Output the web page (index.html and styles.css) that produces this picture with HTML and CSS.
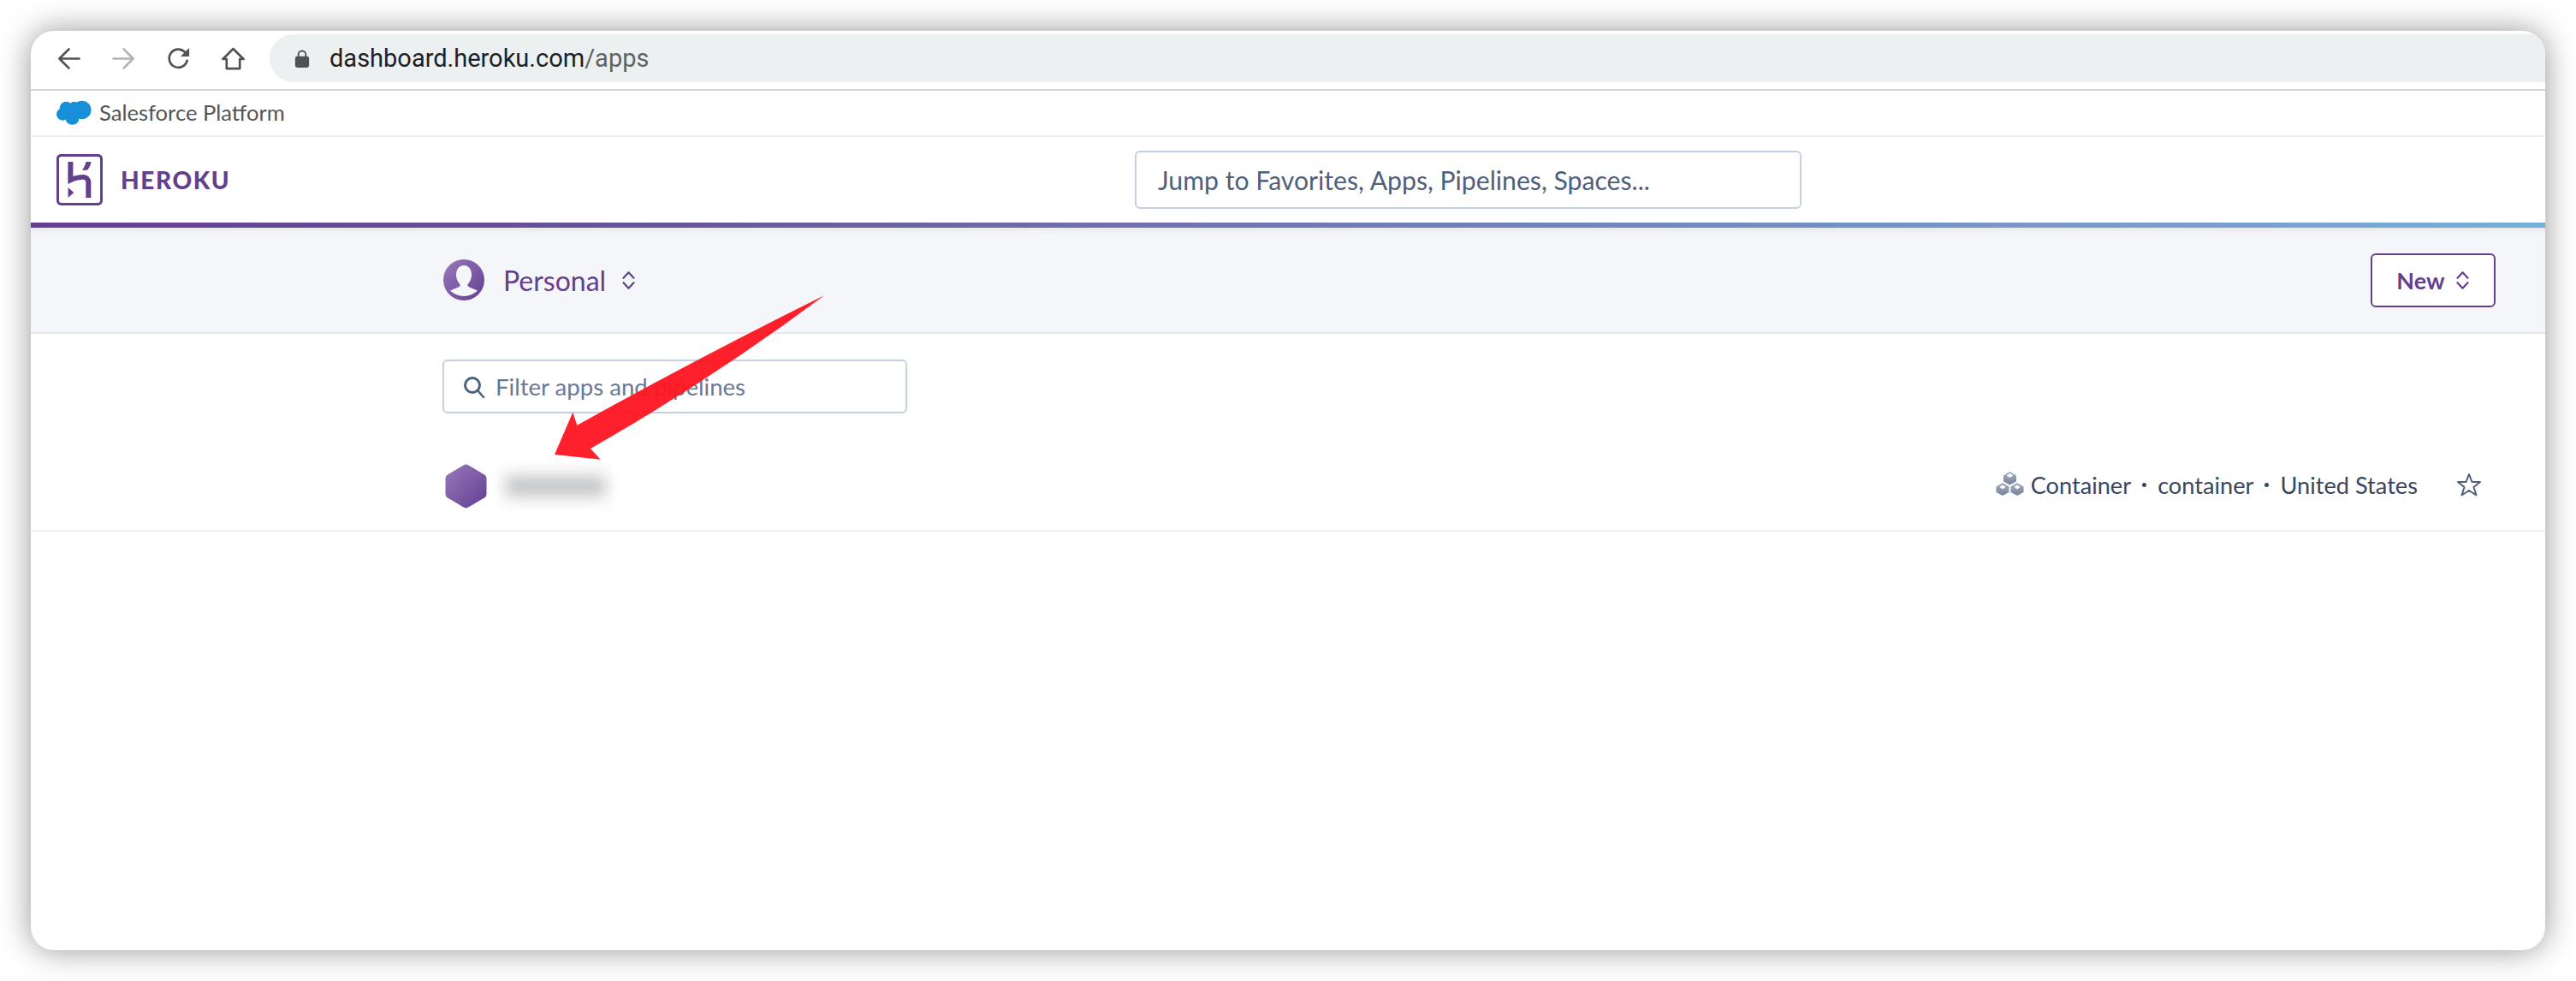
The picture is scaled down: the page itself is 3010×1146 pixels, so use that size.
FILE: index.html
```html
<!DOCTYPE html>
<html lang="en">
<head>
<meta charset="utf-8">
<title>Heroku | Personal apps</title>
<link rel="stylesheet" href="styles.css">
</head>
<body>
<main class="window">
  <div class="toolbar">
    <div class="nav-btn">
      <svg class="chrome-icon" viewBox="0 0 28 28"><path d="M26.500 14H2.500M14 2.500 2.500 14 14 25.500" fill="none" stroke="#505356" stroke-width="2.800" stroke-linecap="round" stroke-linejoin="round"/></svg>
    </div>
    <div class="nav-btn">
      <svg class="chrome-icon" viewBox="0 0 28 28"><path d="M1.500 14H25.500M14 2.500 25.500 14 14 25.500" fill="none" stroke="#b1b3b5" stroke-width="2.800" stroke-linecap="round" stroke-linejoin="round"/></svg>
    </div>
    <div class="nav-btn">
      <svg class="chrome-icon" viewBox="0 0 28 28"><path d="M24.500 16.500A11 11 0 1 1 21.500 5.800" fill="none" stroke="#505356" stroke-width="2.800" stroke-linecap="round"/><path d="M27 1v10.500H16.500z" fill="#505356"/></svg>
    </div>
    <div class="nav-btn">
      <svg class="chrome-icon" viewBox="0 0 28 28"><path d="M14 2 1.500 14.500H6V26H22V14.500H26.500Z" fill="none" stroke="#505356" stroke-width="2.800" stroke-linejoin="round"/></svg>
    </div>
    <div class="address">
      <svg class="lock" viewBox="0 0 18 22"><path d="M4.500 9V6a4.500 4.500 0 0 1 9 0v3" fill="none" stroke="#505356" stroke-width="2"/><rect x="0.500" y="8" width="17" height="14" rx="2.500" fill="#505356"/></svg>
      <span class="url">dashboard.heroku.com<span class="url-path">/apps</span></span>
    </div>
  </div>

  <div class="bookmarks">
    <svg class="cloud" viewBox="0 0 40 28"><g fill="#1790d8"><circle cx="11" cy="9" r="7.500"/><circle cx="20" cy="7" r="5.500"/><circle cx="29" cy="11" r="10.500"/><circle cx="7" cy="16" r="7"/><circle cx="18" cy="20" r="8"/><rect x="8" y="10" width="24" height="10"/></g></svg>
    <span class="bookmark-label">Salesforce Platform</span>
  </div>

  <header class="site-header">
    <div class="brand">
      <svg class="logo" viewBox="1.230 0 21.540 24" preserveAspectRatio="none"><path fill="#643f8e" d="M20.610 0H3.390C2.189 0 1.230.96 1.230 2.160v19.681c0 1.198.959 2.159 2.160 2.159h17.220c1.200 0 2.159-.961 2.159-2.159V2.160C22.770.96 21.811 0 20.610 0zm.96 21.841c0 .539-.421.96-.96.96H3.390c-.54 0-.96-.421-.96-.96V2.160c0-.54.42-.96.96-.96h17.220c.539 0 .96.42.96.96v19.681zM6.630 20.399L9.330 18l-2.700-2.400v4.799zm9.720-9.719c-.479-.48-1.379-1.080-2.879-1.080-1.621 0-3.301.421-4.500.84V3.600h-2.400v10.380l1.680-.78s2.760-1.260 5.160-1.260c1.200 0 1.500.66 1.500 1.260v7.200h2.400v-7.200c.059-.179.059-1.379-.961-2.280zM13.170 7.500h2.400c1.080-1.260 1.620-2.521 1.800-3.900h-2.399c-.241 1.379-.841 2.640-1.801 3.900z"/></svg>
      <span class="wordmark">HEROKU</span>
    </div>
    <div class="jump">Jump to Favorites, Apps, Pipelines, Spaces...</div>
  </header>
  <div class="rainbow"></div>

  <section class="subheader">
    <div class="account">
      <svg class="avatar" viewBox="0 0 48 48">
        <defs><linearGradient id="purple-a" x1="0" y1="0" x2="1" y2="1"><stop offset="0" stop-color="#9a79bb"/><stop offset="1" stop-color="#623f91"/></linearGradient></defs>
        <circle cx="24" cy="24" r="24" fill="url(#purple-a)"/>
        <path d="M24 7c-6 0-9 5-9 11 0 5 2.500 9 4.500 11 .5 2-.5 3-2 3.500L8 36.500A24 24 0 0 0 24 43a24 24 0 0 0 16-6.500L30.500 32.500c-1.500-.5-2.500-1.500-2-3.500 2-2 4.500-6 4.500-11 0-6-3-11-9-11z" fill="#f5f6fa"/>
      </svg>
      <span class="account-name">Personal</span>
      <svg class="updown updown-account" viewBox="0 0 15 21"><path d="M2 8 7.500 2 13 8M2 13 7.500 19 13 13" fill="none" stroke="#643f8e" stroke-width="2" stroke-linecap="round" stroke-linejoin="round"/></svg>
    </div>
    <button class="new-btn">New<svg class="updown" viewBox="0 0 15 21"><path d="M2 8 7.500 2 13 8M2 13 7.500 19 13 13" fill="none" stroke="#643f8e" stroke-width="2" stroke-linecap="round" stroke-linejoin="round"/></svg></button>
  </section>

  <div class="filter">
    <svg class="search-icon" viewBox="0 0 26 26"><circle cx="11" cy="11" r="8.500" fill="none" stroke="#4d6280" stroke-width="3"/><path d="M17 17 24 25" stroke="#4d6280" stroke-width="2.600" stroke-linecap="round"/></svg>
    <span class="filter-label">Filter apps and pipelines</span>
  </div>

  <div class="app-row">
    <svg class="hexagon" viewBox="0 0 48 52">
      <defs><linearGradient id="purple-b" x1="0" y1="0" x2="1" y2="1"><stop offset="0" stop-color="#9a79bb"/><stop offset="1" stop-color="#623f91"/></linearGradient></defs>
      <path d="M21.500 1.200a5 5 0 0 1 5 0L45.500 12.500A5 5 0 0 1 48 16.800V35.200a5 5 0 0 1-2.500 4.300L26.500 50.800a5 5 0 0 1-5 0L2.500 39.500A5 5 0 0 1 0 35.200V16.800A5 5 0 0 1 2.500 12.500Z" fill="url(#purple-b)"/>
    </svg>
    <div class="blurred"><div class="blur-bar"></div></div>
    <div class="app-meta">
      <svg class="stack" viewBox="0 0 33 28">
        <defs><linearGradient id="slate" x1="0" y1="0" x2="0" y2="1"><stop offset="0" stop-color="#a5aec2"/><stop offset="1" stop-color="#76829c"/></linearGradient></defs>
        <g fill="url(#slate)"><path d="M16.500 0 24 4.500V11.500L16.500 15.500 9 11.500V4.500Z"/><path d="M8 13 15.500 17.500V24L8 28 .5 24V17.500Z"/><path d="M25 13 32.500 17.500V24L25 28 17.500 24V17.500Z"/></g>
        <g fill="#fff"><path d="M16.500 2 20.500 4.500 16.500 7 12.500 4.500Z"/><path d="M8 15.500 11.500 18 8 20.500 4.500 18Z"/><path d="M25 15.500 28.500 18 25 20.500 21.500 18Z"/></g>
      </svg>
      <span class="meta-text">Container</span>
      <span class="dot"></span>
      <span class="meta-text">container</span>
      <span class="dot"></span>
      <span class="meta-text">United States</span>
      <svg class="star" viewBox="0 0 30 28"><path d="M15 2 18.500 11H28L20.500 17 23.500 26.500 15 21 6.500 26.500 9.500 17 2 11H11.500Z" fill="none" stroke="#4f5f7c" stroke-width="2" stroke-linejoin="round"/></svg>
    </div>
  </div>

  <svg class="arrow" viewBox="0 0 320 200"><path d="M315.300 4Q168.500 76.700 26.300 155.700L21.300 140.700 0 190 53.700 195.700 42 183Q184 102 315.300 4Z" fill="#fe1723"/></svg>
</main>
</body>
</html>
```
FILE: styles.css
```css
* { box-sizing: border-box; }
html, body { margin: 0; height: 100%; background: #fff; }
body { padding: 36px; overflow: hidden; }
.window {
  position: relative;
  width: 2938px;
  height: 1074px;
  background: #fff;
  border-radius: 27px;
  box-shadow: 0 0 36px rgba(0, 0, 0, .42);
  overflow: hidden;
  font-family: "Lato", "Open Sans", sans-serif;
}
.toolbar {
  display: flex;
  align-items: center;
  height: 70px;
  padding: 4px 0 8px 12px;
  border-bottom: 2px solid #d4d4d4;
}
.nav-btn { width: 64px; display: flex; justify-content: center; }
.chrome-icon { width: 27px; height: 27px; }
.address {
  flex: 1;
  height: 56px;
  margin-left: 11px;
  padding-left: 29px;
  display: flex;
  align-items: center;
  gap: 23px;
  background: #ecf0f1;
  border-radius: 28px 0 0 28px;
}
.lock { width: 18px; height: 21px; }
.url { font: 29px "Roboto", sans-serif; color: #202124; }
.url-path { color: #5f6368; }
.bookmarks {
  display: flex;
  align-items: center;
  gap: 9px;
  height: 54px;
  padding: 0 0 2px 30px;
  border-bottom: 2px solid #eeeef3;
}
.cloud { width: 41px; height: 29px; }
.bookmark-label { font-size: 25.600px; color: #555; }
.site-header { display: flex; align-items: center; height: 100px; padding-left: 30px; }
.brand { display: flex; align-items: center; gap: 21px; width: 1260px; }
.logo { width: 54px; height: 60px; }
.wordmark { font-size: 28px; font-weight: 900; letter-spacing: 1.600px; color: #643f8e; }
.jump {
  width: 779px;
  height: 68px;
  padding-left: 25px;
  display: flex;
  align-items: center;
  font-size: 30.200px;
  color: #4f5f7e;
  border: 2px solid #c5d0e3;
  border-radius: 6px;
}
.rainbow {
  height: 6px;
  background: linear-gradient(to right, #643f8e 0%, #67559a 26%, #7070ac 43%, #7391c3 72%, #7b97cc 80%, #75afda 100%);
}
.subheader {
  display: flex;
  align-items: center;
  justify-content: space-between;
  height: 124px;
  padding: 0 58px 0 482px;
  background: #f5f6fa;
  border-bottom: 2px solid #e3e7f0;
  box-shadow: inset 0 8px 8px -6px rgba(0, 0, 0, .08);
}
.account { display: flex; align-items: center; }
.avatar { width: 48px; height: 48px; }
.account-name { margin-left: 22px; font-size: 32px; color: #643f8e; }
.updown { width: 17px; height: 23px; }
.updown-account { margin-left: 18px; }
.new-btn {
  display: flex;
  align-items: center;
  justify-content: center;
  gap: 12px;
  width: 146px;
  height: 63px;
  padding: 0;
  font: 700 27px "Lato", sans-serif;
  color: #643f8e;
  background: #fff;
  border: 2px solid #643f8e;
  border-radius: 6px;
}
.filter {
  display: flex;
  align-items: center;
  gap: 12px;
  width: 543px;
  height: 63px;
  margin: 30px 0 0 481px;
  padding-left: 22px;
  border: 2px solid #c5d0e3;
  border-radius: 6px;
}
.search-icon { width: 26px; height: 26px; }
.filter-label { font-size: 27.600px; color: #697a96; }
.app-row {
  display: flex;
  align-items: center;
  height: 105px;
  margin-top: 33px;
  padding: 0 74px 0 484px;
  border-bottom: 2px solid #eeeef3;
}
.hexagon { width: 49px; height: 52px; }
.blurred {
  display: flex;
  align-items: center;
  justify-content: center;
  width: 133px;
  height: 54px;
  margin-left: 13px;
  background: #fdfdfd;
}
.blur-bar { width: 116px; height: 22px; background: #bfc0c2; filter: blur(9px); }
.app-meta { display: flex; align-items: center; margin: -3px 0 0 auto; }
.stack { width: 33px; height: 28px; margin: -3px 8px 0 0; }
.meta-text { font-size: 27.200px; color: #39465f; }
.dot { width: 5px; height: 5px; margin: 0 13px; border-radius: 50%; background: #39465f; }
.star { width: 30px; height: 28px; margin-left: 45px; }
.arrow { position: absolute; left: 612px; top: 305px; width: 320px; height: 200px; opacity: .96; }
```
